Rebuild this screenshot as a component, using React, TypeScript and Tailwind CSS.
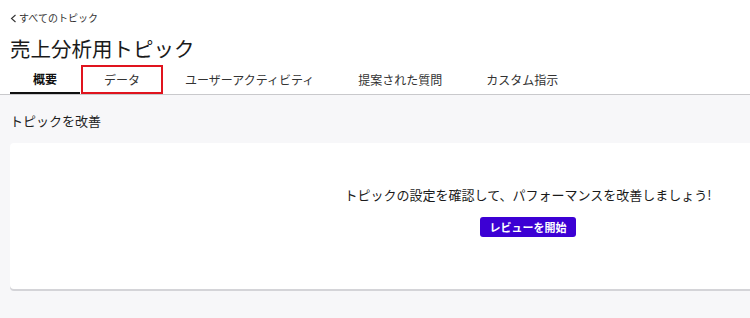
import React from "react";

const tabs = ["概要", "データ", "ユーザーアクティビティ", "提案された質問", "カスタム指示"];

export default function App() {
  const font = { fontFamily: '"Noto Sans CJK JP", "Noto Sans", sans-serif' };

  return (
    <div className="w-[750px] h-[318px] overflow-hidden bg-[#f7f7f9] text-[#1f1f1f]" style={font}>
      {/* Header */}
      <div className="bg-white border-b border-[#c9c9cc]">
        <div className="px-[10px] pt-[11px]">
          <a href="#" className="flex items-center gap-[2px] text-[10px] leading-[14px] text-[#333]">
            <svg width="7" height="9" viewBox="0 0 7 9" fill="none" stroke="#333" strokeWidth="1.1">
              <polyline points="5.5 1 1.5 4.5 5.5 8" />
            </svg>
            すべてのトピック
          </a>
          <h1 className="mt-[9px] text-[20.5px] leading-[28px] font-normal text-[#1a1a1a]">売上分析用トピック</h1>
        </div>
        <div className="flex items-end pl-[10px] mt-[3px]">
          {tabs.map((t, i) => (
            <div
              key={t}
              className={
                i === 0
                  ? "h-[29px] px-[23px] flex items-center text-[12px] font-bold text-[#111] border-b-2 border-[#111]"
                  : i === 1
                  ? "h-[29px] ml-[1px] px-[21px] flex items-center text-[12px] text-[#333] border-2 border-[#e0141e]"
                  : "h-[29px] px-[22px] flex items-center text-[12px] text-[#333]"
              }
            >
              {t}
            </div>
          ))}
        </div>
      </div>

      {/* Body */}
      <div className="px-[10px]">
        <h2 className="pt-[17px] text-[13px] leading-[18px] text-[#222]">トピックを改善</h2>
        <div className="mt-[13px] w-[1036px] h-[146px] bg-white rounded-[4px] shadow-[0_2px_0_#d4d4d8] flex flex-col items-center pt-[43px]">
          <p className="text-[13px] leading-[18px] text-[#1a1a1a]">
            トピックの設定を確認して、パフォーマンスを改善しましょう!
          </p>
          <button className="mt-[13px] h-[20px] w-[96px] rounded-[3px] bg-[#3c00d4] text-white text-[11px] font-bold">
            レビューを開始
          </button>
        </div>
      </div>
    </div>
  );
}
